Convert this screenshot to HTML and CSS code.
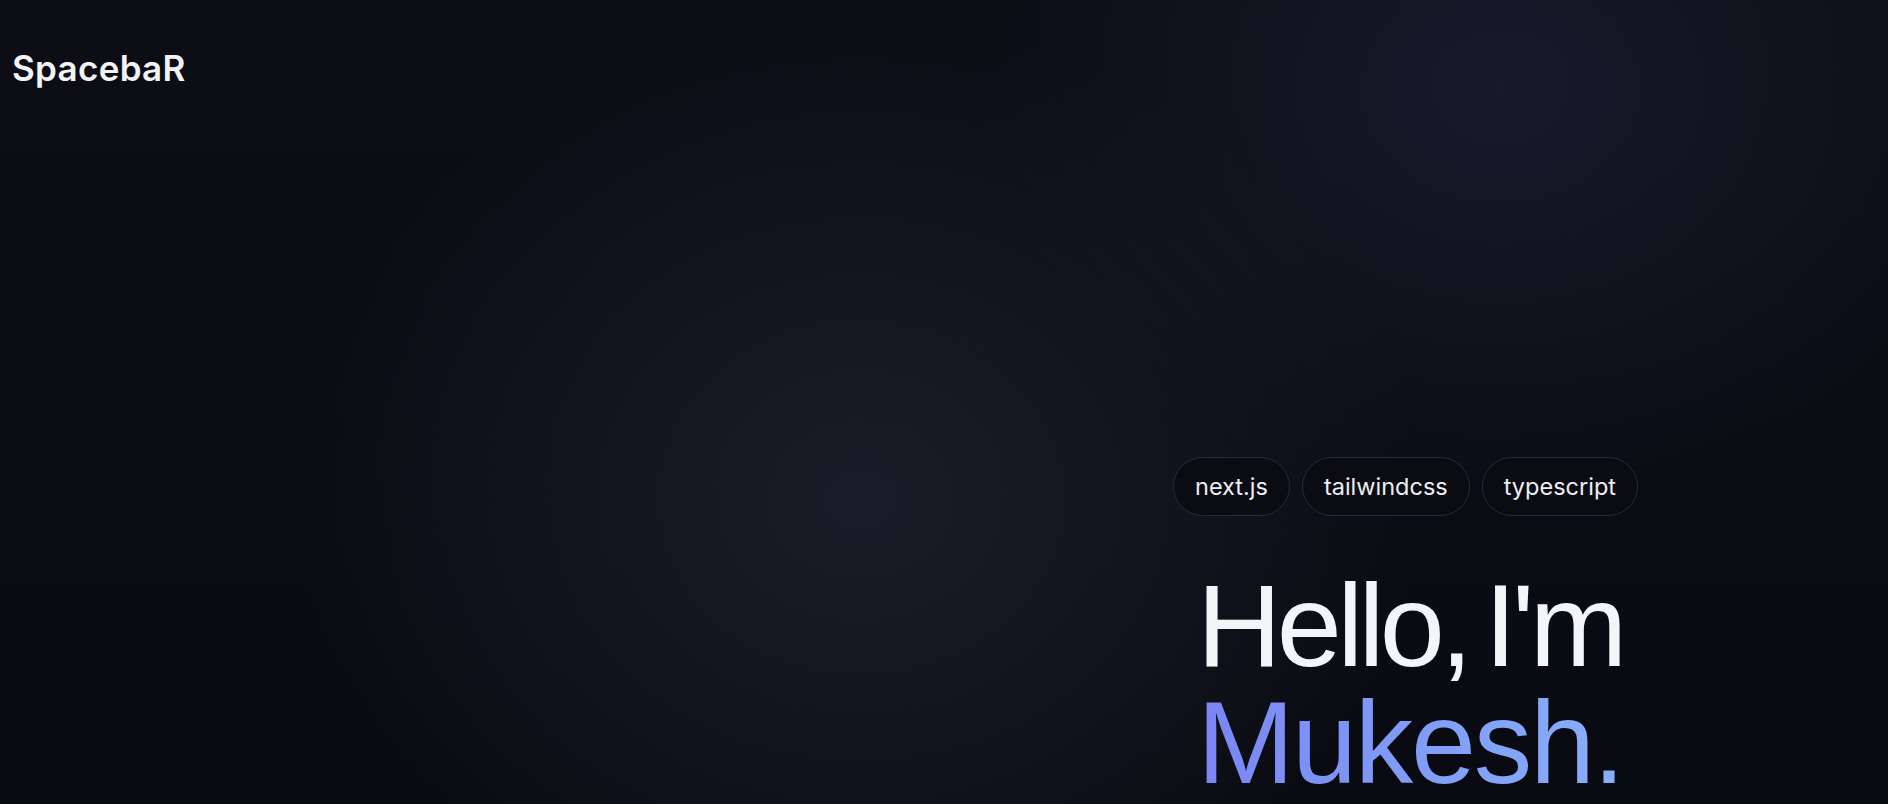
FILE: index.html
```html
<!DOCTYPE html>
<html lang="en">
<head>
<meta charset="utf-8">
<title>SpacebaR</title>
<link rel="stylesheet" href="styles.css">
</head>
<body>
<div class="page">
  <header class="header">
    <div class="logo">SpacebaR</div>
  </header>
  <main class="hero">
    <div class="hero-content">
      <ul class="tags">
        <li class="tag">next.js</li>
        <li class="tag">tailwindcss</li>
        <li class="tag">typescript</li>
      </ul>
      <h1 class="title">
        <span class="line greeting">Hello, I'm</span>
        <span class="line name">Mukesh.</span>
      </h1>
    </div>
  </main>
</div>
</body>
</html>
```
FILE: styles.css
```css
* { box-sizing: border-box; }
html, body {
  margin: 0;
  padding: 0;
  height: 100%;
  overflow: hidden;
}
body {
  background-color: #0b0c13;
  background-image:
    radial-gradient(ellipse 560px 480px at 860px 500px, rgba(28, 29, 42, 0.95), rgba(28, 29, 42, 0) 100%),
    radial-gradient(ellipse 520px 420px at 1500px 90px, rgba(24, 27, 44, 0.9), rgba(24, 27, 44, 0) 100%),
    linear-gradient(180deg, #0c0d15 0%, #0a0b12 100%);
  font-family: "Inter", "Noto Sans", sans-serif;
  color: #f4f5f8;
}
.page {
  width: 1888px;
  height: 804px;
  display: flex;
  flex-direction: column;
}
.header {
  padding: 47px 0 0 12px;
}
.logo {
  font-size: 35px;
  line-height: 1.2;
  font-weight: 600;
  letter-spacing: 0.3px;
  color: #f2f3f6;
}
.hero {
  display: flex;
  justify-content: flex-end;
  padding: 368px 250px 0 0;
}
.hero-content {
  width: 465px;
  display: flex;
  flex-direction: column;
}
.tags {
  list-style: none;
  margin: 0;
  padding: 0;
  display: flex;
  gap: 12px;
}
.tag {
  height: 59px;
  padding: 0 21px;
  display: flex;
  align-items: center;
  border: 1.5px solid #242b3c;
  border-radius: 30px;
  background: #0b0c13;
  font-size: 23.5px;
  color: #eceef3;
}
.title {
  margin: 51px 0 0 24px;
  font-family: "Liberation Sans", Arial, sans-serif;
  font-weight: 400;
  font-size: 117px;
  line-height: 117px;
}
.line {
  display: block;
  white-space: nowrap;
}
.greeting {
  letter-spacing: -0.04em;
  word-spacing: -0.1em;
}
.name {
  letter-spacing: -0.02em;
  background: linear-gradient(90deg, #7a85f4 0%, #82a0f7 60%, #88aef9 100%);
  -webkit-background-clip: text;
  background-clip: text;
  color: transparent;
  width: max-content;
}
```
